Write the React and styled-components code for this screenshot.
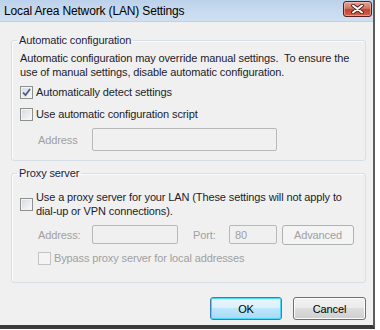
import React from 'react'
import styled, { createGlobalStyle, css } from 'styled-components'

const GlobalStyle = createGlobalStyle`
  html, body {
    margin: 0;
    padding: 0;
    background: #ffffff;
  }
  body {
    font-family: "Liberation Sans", Arial, sans-serif;
    font-size: 11px;
    letter-spacing: -0.12px;
    color: #1c1c2c;
  }
`

const Window = styled.div`
  width: 373px;
  height: 325px;
  background: #f0f0f0;
  border-right: 2px solid #5c5c5c;
  border-bottom: 4px solid #3a3a3a;
  display: flex;
  flex-direction: column;
`

const TitleBar = styled.div`
  height: 22px;
  flex: none;
  display: flex;
  align-items: center;
  justify-content: space-between;
  padding: 0 0 0 4px;
  background: linear-gradient(#bcd1ea, #c9dbef 60%, #d0e0f2);
  border-bottom: 1px solid #c0d0e2;
  box-sizing: border-box;
`

const Title = styled.span`
  font-size: 12px;
  color: #000;
  letter-spacing: -0.15px;
`

const CloseButton = styled.div`
  width: 29px;
  height: 16px;
  margin: -3px 1px 0 0;
  box-sizing: border-box;
  border: 1px solid #5a1e1e;
  border-radius: 3px;
  background: linear-gradient(#e4a597, #d07664 45%, #c2432e 55%, #d0664c);
  display: flex;
  align-items: center;
  justify-content: center;
  box-shadow: inset 0 0 0 1px rgba(255, 220, 210, 0.45);
`

const Body = styled.div`
  flex: 1;
  padding: 11px 7px 0 11px;
  display: flex;
  flex-direction: column;
`

const Group = styled.fieldset`
  margin: ${p => p.$top || 0}px 0 0;
  padding: 0 8px ${p => p.$bottom}px;
  border: 1px solid #d5dfe5;
  border-radius: 3px;
  box-shadow: inset 1px 1px 0 #fbfcfd;
  min-width: 0;
  display: flex;
  flex-direction: column;
`

const Legend = styled.legend`
  padding: 0 2px;
  margin-left: -3px;
  line-height: 14px;
  font-size: 11px;
  color: #1e2240;
`

const Text = styled.p`
  margin: ${p => p.$top || 0}px 0 0;
  line-height: 14px;
  white-space: nowrap;
`

const CheckRow = styled.label`
  display: flex;
  align-items: center;
  gap: 3px;
  height: ${p => p.$h || 22}px;
  margin: ${p => p.$top || 0}px 0 0 ${p => p.$indent || 0}px;
  line-height: 14px;
  white-space: nowrap;
  color: ${p => (p.$disabled ? '#a0a0a0' : 'inherit')};
`

const Box = styled.span`
  flex: none;
  width: 13px;
  height: 13px;
  box-sizing: border-box;
  border: 1px solid ${p => (p.$disabled ? '#c4c4c4' : '#8e8f8f')};
  background: ${p =>
    p.$disabled
      ? '#f4f4f4'
      : 'linear-gradient(135deg, #d6d9de, #eef0f3 70%, #fafafa)'};
  box-shadow: inset 0 0 0 1px #f4f4f4;
  display: flex;
  align-items: center;
  justify-content: center;
`

const FieldRow = styled.div`
  display: flex;
  align-items: center;
  height: ${p => p.$h}px;
  margin-top: ${p => p.$top || 0}px;
  padding-left: 18px;
`

const Label = styled.span`
  width: ${p => p.$w}px;
  margin-left: ${p => p.$gap || 0}px;
  flex: none;
  color: #a0a0a0;
`

const Input = styled.div`
  width: ${p => p.$w}px;
  height: ${p => p.$h}px;
  box-sizing: border-box;
  border: 1px solid #b8b8b8;
  border-radius: 2px;
  background: #f0f0f0;
  color: #a0a0a0;
  padding: 2px 0 0 5px;
  line-height: 14px;
  flex: none;
`

const buttonBase = css`
  box-sizing: border-box;
  height: ${p => p.$h || 23}px;
  width: ${p => p.$w || 73}px;
  margin-left: ${p => p.$gap || 0}px;
  border-radius: 3px;
  display: flex;
  align-items: center;
  justify-content: center;
  font-family: inherit;
  font-size: 11px;
  flex: none;
`

const Button = styled.div`
  ${buttonBase};
  border: 1px solid #707070;
  color: #000;
  background: linear-gradient(#f2f2f2, #ebebeb 50%, #dddddd 50%, #cfcfcf);
  box-shadow: inset 0 0 0 1px #fcfcfc;
`

const DefaultButton = styled.div`
  ${buttonBase};
  border: 1px solid #3c7fb1;
  color: #000;
  background: linear-gradient(#eaf6fd, #d9f0fc 50%, #bee6fd 50%, #a7d9f5);
  box-shadow: inset 0 0 0 1px #48d8fb;
`

const DisabledButton = styled.div`
  ${buttonBase};
  border: 1px solid #adb2b5;
  color: #a0a0a0;
  background: #f4f4f4;
`

const Footer = styled.div`
  display: flex;
  justify-content: flex-end;
  gap: 11px;
  margin-top: 14px;
`

const Check = () => (
  <svg width="9" height="9" viewBox="0 0 9 9">
    <path d="M1 4.5 L3.5 7.2 L8 1" fill="none" stroke="#4a5d8c" strokeWidth="1.8" />
  </svg>
)

const CloseGlyph = () => (
  <svg width="13" height="10" viewBox="0 0 13 10">
    <path d="M2 1.5 L11 8.5 M11 1.5 L2 8.5" stroke="#4a1a14" strokeWidth="3.6" strokeLinecap="round" />
    <path d="M2 1.5 L11 8.5 M11 1.5 L2 8.5" stroke="#ffffff" strokeWidth="2" strokeLinecap="round" />
  </svg>
)

const App = () => (
  <>
    <GlobalStyle />
    <Window>
      <TitleBar>
        <Title>Local Area Network (LAN) Settings</Title>
        <CloseButton><CloseGlyph /></CloseButton>
      </TitleBar>
      <Body>
        <Group $bottom={9}>
          <Legend>Automatic configuration</Legend>
          <Text $top={4}>
            Automatic configuration may override manual settings.&nbsp; To ensure the
            <br />
            use of manual settings, disable automatic configuration.
          </Text>
          <CheckRow $top={2}>
            <Box><Check /></Box>
            Automatically detect settings
          </CheckRow>
          <CheckRow>
            <Box />
            Use automatic configuration script
          </CheckRow>
          <FieldRow $h={23} $top={3}>
            <Label $w={54}>Address</Label>
            <Input $w={185} $h={23} />
          </FieldRow>
        </Group>
        <Group $top={5} $bottom={16}>
          <Legend>Proxy server</Legend>
          <CheckRow $top={10} $h={28}>
            <Box />
            <span>
              Use a proxy server for your LAN (These settings will not apply to
              <br />
              dial-up or VPN connections).
            </span>
          </CheckRow>
          <FieldRow $h={23} $top={5}>
            <Label $w={54}>Address:</Label>
            <Input $w={86} $h={19} />
            <Label $w={36} $gap={15}>Port:</Label>
            <Input $w={48} $h={19}>80</Input>
            <DisabledButton $w={72} $h={20} $gap={5}>Advanced</DisabledButton>
          </FieldRow>
          <CheckRow $top={4} $h={16} $indent={18} $disabled>
            <Box $disabled />
            Bypass proxy server for local addresses
          </CheckRow>
        </Group>
        <Footer>
          <DefaultButton $w={72}>OK</DefaultButton>
          <Button $w={73}>Cancel</Button>
        </Footer>
      </Body>
    </Window>
  </>
)

export default App
